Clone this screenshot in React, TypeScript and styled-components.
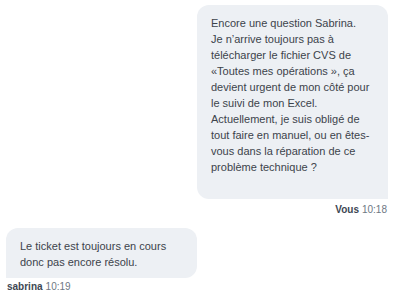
import styled, { createGlobalStyle } from "styled-components";

interface Message {
  id: number;
  author: string;
  time: string;
  text: string;
  mine: boolean;
}

const messages: Message[] = [
  {
    id: 1,
    author: "Vous",
    time: "10:18",
    mine: true,
    text:
      "Encore une question Sabrina.\nJe n’arrive toujours pas à télécharger le fichier CVS de «Toutes mes opérations », ça devient urgent de mon côté pour le suivi de mon Excel.\nActuellement, je suis obligé de tout faire en manuel, ou en êtes-vous dans la réparation de ce problème technique ?",
  },
  {
    id: 2,
    author: "sabrina",
    time: "10:19",
    mine: false,
    text: "Le ticket est toujours en cours donc pas encore résolu.",
  },
];

const GlobalStyle = createGlobalStyle`
  body {
    margin: 0;
    background: #ffffff;
    font-family: "Liberation Sans", Arial, sans-serif;
  }
`;

const Thread = styled.div`
  display: flex;
  flex-direction: column;
  gap: 12px;
  padding: 5px 11px 0 6px;
`;

const Group = styled.div<{ $mine: boolean }>`
  display: flex;
  flex-direction: column;
  align-items: ${(p) => (p.$mine ? "flex-end" : "flex-start")};
  gap: ${(p) => (p.$mine ? "5px" : "3px")};
`;

const Bubble = styled.div<{ $mine: boolean }>`
  box-sizing: border-box;
  width: 191px;
  background: #edf0f4;
  color: #3c434b;
  font-size: 11px;
  line-height: 16px;
  white-space: pre-line;
  padding: ${(p) => (p.$mine ? "10px 9px 24px 14px" : "10px 9px 8px 14px")};
  border-radius: ${(p) => (p.$mine ? "12px 12px 0 12px" : "12px 12px 12px 0")};
`;

const Meta = styled.div`
  font-size: 10px;
  line-height: 12px;
  color: #6e7884;
  padding: 0 1px 0 1px;
`;

const Author = styled.span`
  font-weight: bold;
  color: #3d4753;
  margin-right: 3px;
`;

export default function App() {
  return (
    <>
      <GlobalStyle />
      <Thread>
        {messages.map((m) => (
          <Group key={m.id} $mine={m.mine}>
            <Bubble $mine={m.mine}>{m.text}</Bubble>
            <Meta>
              <Author>{m.author}</Author>
              {m.time}
            </Meta>
          </Group>
        ))}
      </Thread>
    </>
  );
}
